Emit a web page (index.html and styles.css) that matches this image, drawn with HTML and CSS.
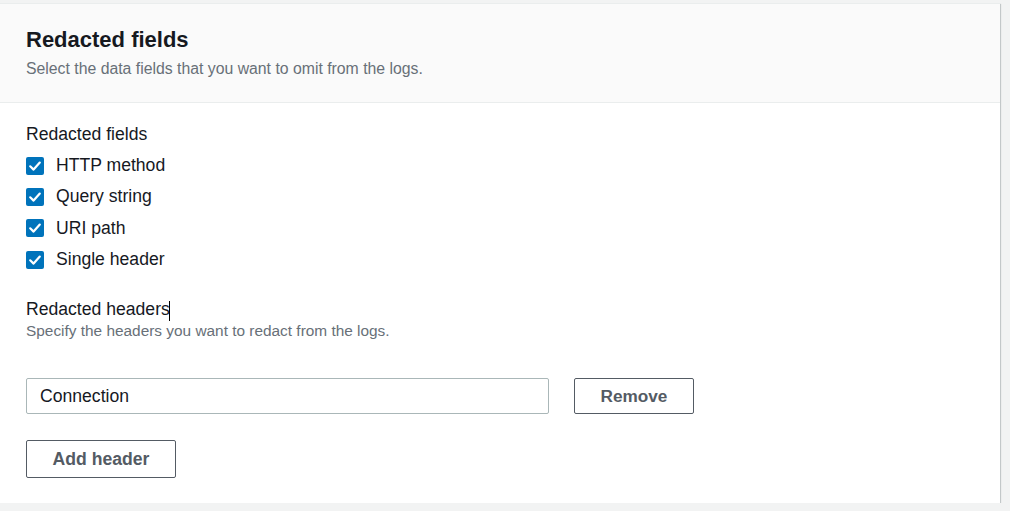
FILE: index.html
```html
<!DOCTYPE html>
<html>
<head>
<meta charset="utf-8">
<link rel="stylesheet" href="styles.css">
</head>
<body>
<div class="card">
  <div class="card-header">
    <h2 class="title">Redacted fields</h2>
    <p class="desc">Select the data fields that you want to omit from the logs.</p>
  </div>
  <div class="card-body">
    <div class="label">Redacted fields</div>
    <div class="checks">
      <label class="check"><span class="box"><svg viewBox="0 0 18 18" width="18" height="18"><path d="M4.2 9.3 L7.6 12.6 L13.8 5.6" fill="none" stroke="#fff" stroke-width="2.2" stroke-linecap="round" stroke-linejoin="round"/></svg></span>HTTP method</label>
      <label class="check"><span class="box"><svg viewBox="0 0 18 18" width="18" height="18"><path d="M4.2 9.3 L7.6 12.6 L13.8 5.6" fill="none" stroke="#fff" stroke-width="2.2" stroke-linecap="round" stroke-linejoin="round"/></svg></span>Query string</label>
      <label class="check"><span class="box"><svg viewBox="0 0 18 18" width="18" height="18"><path d="M4.2 9.3 L7.6 12.6 L13.8 5.6" fill="none" stroke="#fff" stroke-width="2.2" stroke-linecap="round" stroke-linejoin="round"/></svg></span>URI path</label>
      <label class="check"><span class="box"><svg viewBox="0 0 18 18" width="18" height="18"><path d="M4.2 9.3 L7.6 12.6 L13.8 5.6" fill="none" stroke="#fff" stroke-width="2.2" stroke-linecap="round" stroke-linejoin="round"/></svg></span>Single header</label>
    </div>
    <div class="label headers-label">Redacted headers<span class="caret"></span></div>
    <p class="desc">Specify the headers you want to redact from the logs.</p>
    <div class="row">
      <div class="input">Connection</div>
      <button class="btn">Remove</button>
    </div>
    <button class="btn add">Add header</button>
  </div>
</div>
</body>
</html>
```
FILE: styles.css
```css
html, body {
  margin: 0;
  padding: 0;
  background: #f2f3f3;
}
body {
  padding-top: 3px;
  font-family: "Liberation Sans", Arial, sans-serif;
  color: #16191f;
}
.card {
  width: 1000px;
  background: #fff;
  border-top: 1px solid #eaeded;
  box-shadow: 0 1px 1px 0 rgba(0,28,36,.3), 1px 1px 1px 0 rgba(0,28,36,.15), -1px 1px 1px 0 rgba(0,28,36,.15);
}
.card-header {
  background: #fafafa;
  border-bottom: 1px solid #eaeded;
  padding: 22px 26px 23px;
}
.title {
  margin: 0;
  font-size: 22px;
  line-height: 28px;
  font-weight: 700;
  color: #16191f;
}
.desc {
  margin: 5px 0 0;
  font-size: 15.8px;
  line-height: 20px;
  color: #687078;
}
.card-body {
  padding: 20px 26px 25px;
  display: flex;
  flex-direction: column;
  align-items: flex-start;
}
.label {
  font-size: 17.6px;
  line-height: 22px;
}
.checks {
  display: flex;
  flex-direction: column;
  margin-top: 5px;
}
.check {
  display: flex;
  align-items: center;
  height: 31.3px;
  font-size: 17.6px;
  gap: 12px;
}
.box {
  width: 18px;
  height: 18px;
  background: #0073bb;
  border-radius: 2px;
  display: block;
}
.box svg {
  display: block;
}
.headers-label {
  margin-top: 24px;
  line-height: 21px;
}
.caret {
  display: inline-block;
  width: 1px;
  height: 20px;
  background: #000;
  vertical-align: -6px;
  margin-left: -1px;
}
.card-body .desc {
  margin-top: 0;
  font-size: 15.4px;
}
.row {
  display: flex;
  gap: 25px;
  margin-top: 37px;
}
.input {
  height: 34px;
  border: 1px solid #aab7b8;
  border-radius: 2px;
  box-sizing: content-box;
  padding: 0 0 0 13px;
  width: 508px;
  display: flex;
  align-items: center;
  font-size: 17.6px;
  color: #16191f;
  background: #fff;
}
.btn {
  font-family: "Liberation Sans", Arial, sans-serif;
  font-weight: 700;
  font-size: 17.2px;
  color: #545b64;
  background: #fff;
  border: 1px solid #545b64;
  border-radius: 2px;
  height: 36px;
  width: 120px;
  padding: 0;
  cursor: pointer;
}
.add {
  margin-top: 26px;
  width: 150px;
  height: 38px;
  font-size: 17.6px;
}
```
